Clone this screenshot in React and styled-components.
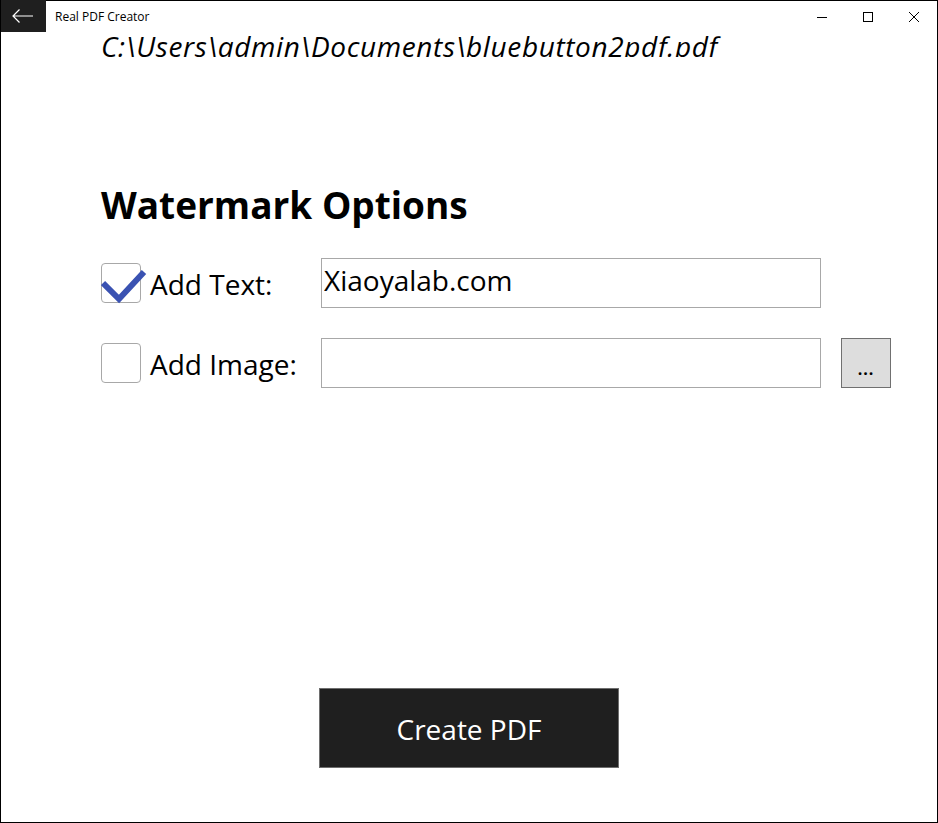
import React, { useState } from "react";
import styled, { createGlobalStyle } from "styled-components";

const GlobalStyle = createGlobalStyle`
  html, body {
    margin: 0;
    padding: 0;
    background: #fff;
  }
  body {
    font-family: "Open Sans", "Noto Sans", sans-serif;
  }
`;

const Window = styled.div`
  box-sizing: border-box;
  width: 938px;
  height: 823px;
  border: 1px solid #000;
  border-top: none;
  background: #fff;
  display: flex;
  flex-direction: column;
  overflow: hidden;
`;

const TitleBar = styled.div`
  height: 32px;
  display: flex;
  align-items: center;
  flex-shrink: 0;
  border-top: 1px solid #000;
  box-sizing: border-box;
`;

const BackButton = styled.div`
  width: 46px;
  height: 32px;
  margin-left: -1px;
  margin-top: -1px;
  background: #1f1f1f;
  display: flex;
  align-items: center;
  justify-content: center;
`;

const AppTitle = styled.div`
  margin-left: 9px;
  font-size: 12px;
  color: #000;
  flex: 1;
`;

const CaptionButton = styled.div`
  width: 46px;
  height: 31px;
  display: flex;
  align-items: center;
  justify-content: center;
`;

const Content = styled.div`
  flex: 1;
  display: flex;
  flex-direction: column;
  padding-left: 100px;
`;

const PathBox = styled.div`
  height: 25px;
  overflow: hidden;
`;

const PathText = styled.div`
  font-style: italic;
  font-size: 28px;
  line-height: 28px;
  letter-spacing: 0.62px;
  color: #000;
  white-space: nowrap;
`;

const Heading = styled.h1`
  margin: 124px 0 0;
  font-size: 37px;
  line-height: 48px;
  font-weight: 700;
  color: #000;
`;

const Rows = styled.div`
  margin-top: 29px;
  display: flex;
  flex-direction: column;
  gap: 30px;
`;

const Row = styled.div`
  display: grid;
  grid-template-columns: 40px 180px 500px 50px;
  align-items: center;
  height: 50px;
`;

const CheckBox = styled.div`
  position: relative;
  box-sizing: border-box;
  width: 40px;
  height: 40px;
  border: 1px solid #a8a8a8;
  border-radius: 4px;
  background: #fff;
`;

const CheckMark = styled.svg`
  position: absolute;
  left: -1px;
  top: -1px;
`;

const Label = styled.div`
  margin-left: 9px;
  font-size: 28px;
  line-height: 50px;
  padding-top: 1px;
  height: 50px;
  box-sizing: border-box;
  color: #000;
`;

const TextInput = styled.input`
  box-sizing: border-box;
  width: 500px;
  height: 50px;
  border: 1px solid #a8a8a8;
  border-radius: 0;
  padding: 0 2px 6px;
  font-family: "Open Sans", "Noto Sans", sans-serif;
  font-size: 28px;
  color: #000;
  outline: none;
  background: #fff;
`;

const BrowseButton = styled.button`
  box-sizing: border-box;
  width: 50px;
  height: 50px;
  margin-left: 20px;
  background: #dddddd;
  border: 1px solid #707070;
  font-family: "Open Sans", "Noto Sans", sans-serif;
  font-size: 16px;
  font-weight: 700;
  padding: 12px 0 0;
  color: #000;
  letter-spacing: 1px;
`;

const Footer = styled.div`
  margin-top: auto;
  margin-left: -100px;
  padding-bottom: 54px;
  display: flex;
  justify-content: center;
`;

const CreateButton = styled.button`
  box-sizing: border-box;
  width: 300px;
  height: 80px;
  background: #1f1f1f;
  border: 1px solid #6e6e6e;
  color: #fff;
  font-family: "Open Sans", "Noto Sans", sans-serif;
  font-size: 28px;
  padding: 2px 0 0;
`;

function OptionRow({ label, checked, value, onToggle, browse }) {
  return (
    <Row>
      <CheckBox onClick={onToggle}>
        {checked && (
          <CheckMark width="46" height="42" viewBox="0 0 46 42">
            <path
              d="M2 20 L18 36 L43 9"
              fill="none"
              stroke="#3a52b2"
              strokeWidth="6"
            />
          </CheckMark>
        )}
      </CheckBox>
      <Label>{label}</Label>
      <TextInput defaultValue={value} />
      {browse ? <BrowseButton>...</BrowseButton> : <span />}
    </Row>
  );
}

export default function App() {
  const [text, setText] = useState(true);
  const [image, setImage] = useState(false);

  return (
    <>
      <GlobalStyle />
      <Window>
        <TitleBar>
          <BackButton>
            <svg width="22" height="14" viewBox="0 0 22 14">
              <path d="M1 7 H21 M7.5 0.5 L1 7 L7.5 13.5" fill="none" stroke="#fff" strokeWidth="1.2" />
            </svg>
          </BackButton>
          <AppTitle>Real PDF Creator</AppTitle>
          <CaptionButton>
            <svg width="10" height="10" viewBox="0 0 10 10">
              <path d="M0 5.5 H10" stroke="#000" strokeWidth="1" />
            </svg>
          </CaptionButton>
          <CaptionButton>
            <svg width="10" height="10" viewBox="0 0 10 10">
              <rect x="0.5" y="0.5" width="9" height="9" fill="none" stroke="#000" strokeWidth="1" />
            </svg>
          </CaptionButton>
          <CaptionButton>
            <svg width="10" height="10" viewBox="0 0 10 10">
              <path d="M0 0 L10 10 M10 0 L0 10" stroke="#000" strokeWidth="1" />
            </svg>
          </CaptionButton>
        </TitleBar>
        <Content>
          <PathBox>
            <PathText>C:\Users\admin\Documents\bluebutton2pdf.pdf</PathText>
          </PathBox>
          <Heading>Watermark Options</Heading>
          <Rows>
            <OptionRow
              label="Add Text:"
              checked={text}
              value="Xiaoyalab.com"
              onToggle={() => setText(!text)}
            />
            <OptionRow
              label="Add Image:"
              checked={image}
              value=""
              onToggle={() => setImage(!image)}
              browse
            />
          </Rows>
          <Footer>
            <CreateButton>Create PDF</CreateButton>
          </Footer>
        </Content>
      </Window>
    </>
  );
}
